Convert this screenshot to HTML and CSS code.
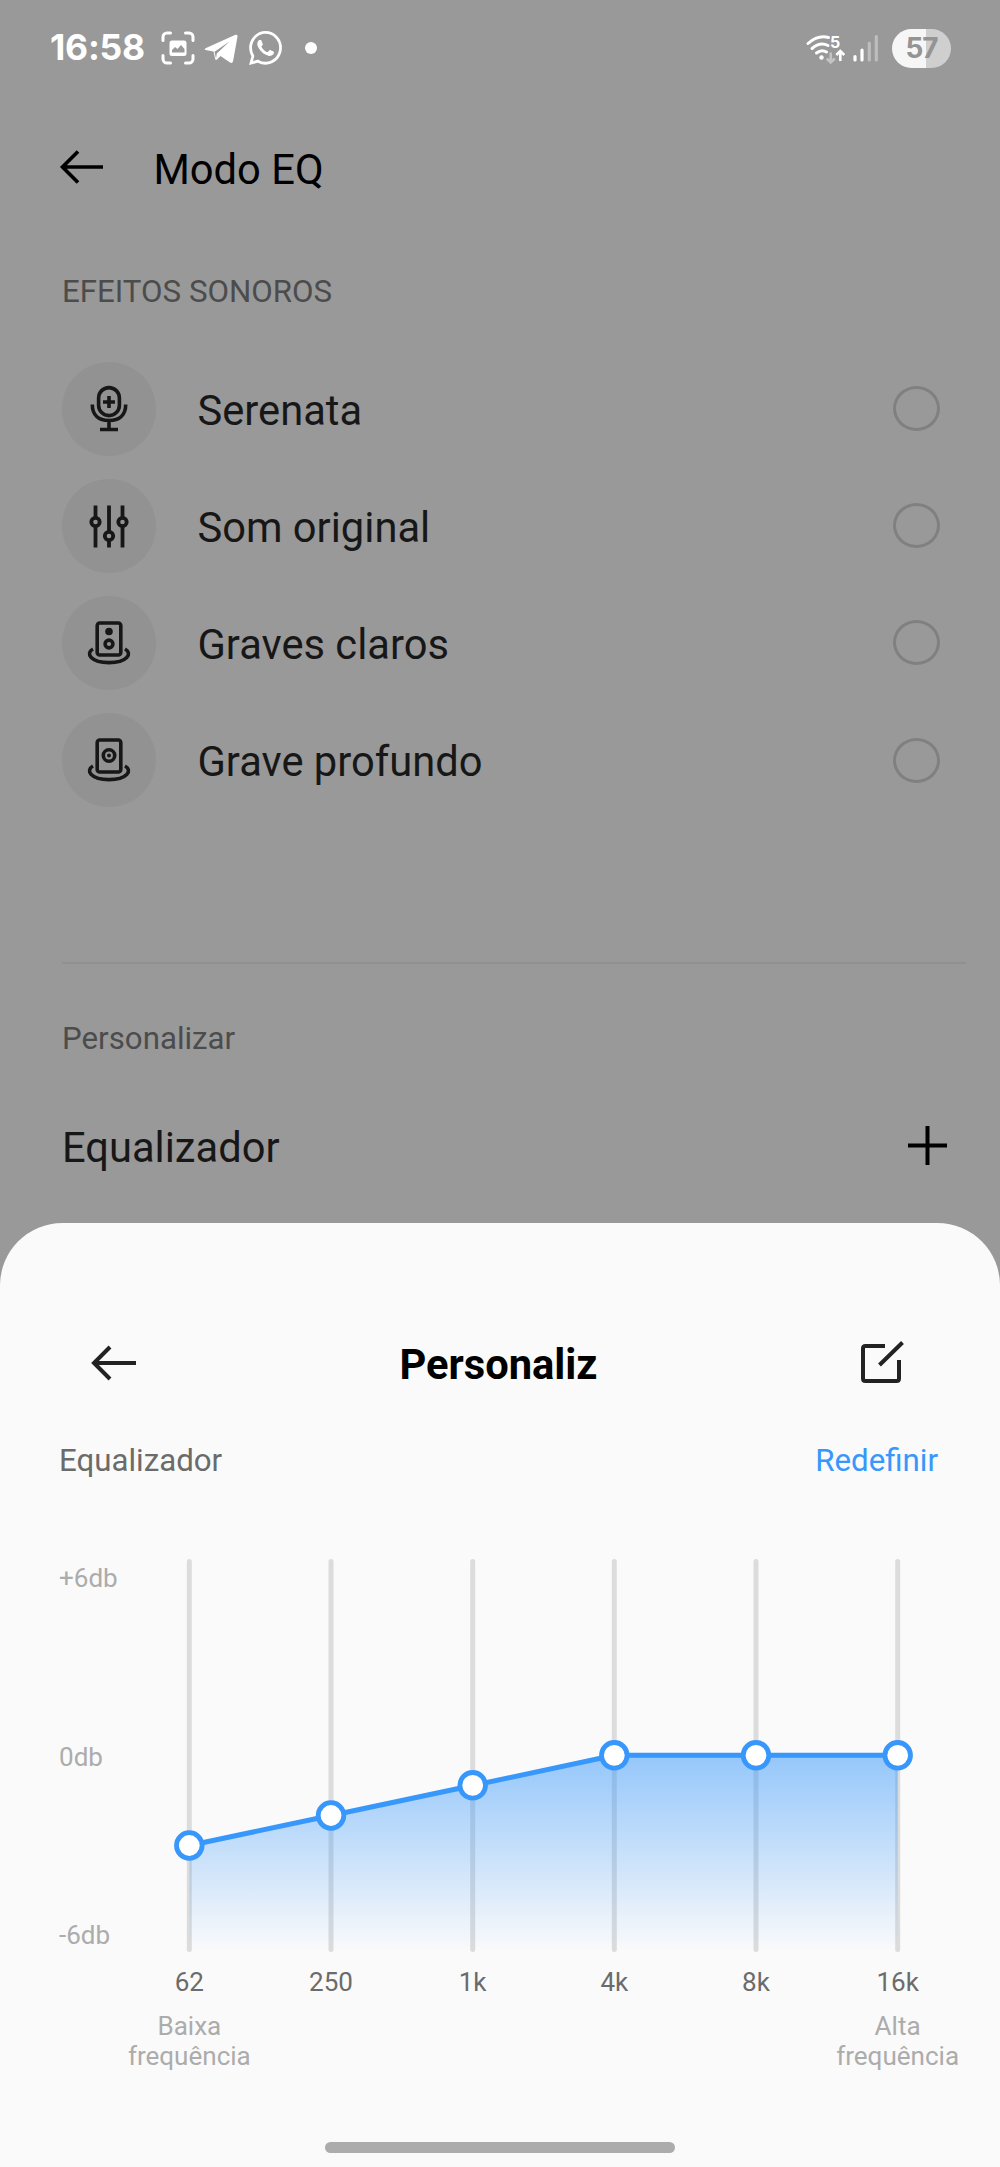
FILE: index.html
```html
<!DOCTYPE html>
<html lang="pt-BR">
<head>
<meta charset="utf-8">
<title>Modo EQ</title>
<link rel="stylesheet" href="styles.css">
</head>
<body>
<div class="screen">
  <div class="status">
    <span class="clock">16:58</span>
    <svg class="capture" width="34" height="34" viewBox="0 0 34 34">
      <path d="M2 9.500V6a4 4 0 0 1 4-4H9.500M24.500 2H28a4 4 0 0 1 4 4V9.500M32 24.500V28a4 4 0 0 1-4 4H24.500M9.500 32H6a4 4 0 0 1-4-4V24.500" fill="none" stroke="#fff" stroke-width="3" stroke-linecap="round"/>
      <rect x="8.500" y="9.500" width="17" height="15.500" rx="2.500" fill="#fff"/>
      <path d="M11 21.500v-2.500l3-3 2.500 2 3.500-4 3.500 4v3.500z" fill="#999"/>
    </svg>
    <svg class="telegram" width="34" height="30" viewBox="0 0 34 30">
      <path d="M1.500 14.300 31.500.8q2.500-.6 2 2L29 27.500q-.8 2.300-3 1L16.500 22 13 25.500q-1.600 1.200-2-1L9.500 17.500 1.500 16q-1.800-.8 0-1.700z" fill="#fff"/>
      <path d="M10.500 17.800 25.500 7.500 12.800 19.500 12 24.500z" fill="#999"/>
    </svg>
    <svg class="whatsapp" width="33" height="34" viewBox="0 0 24 24" preserveAspectRatio="none">
      <path fill="#fff" d="M17.472 14.382c-.297-.149-1.758-.867-2.030-.967-.273-.099-.471-.148-.67.15-.197.297-.767.966-.94 1.164-.173.199-.347.223-.644.075-.297-.15-1.255-.463-2.390-1.475-.883-.788-1.480-1.761-1.653-2.059-.173-.297-.018-.458.13-.606.134-.133.298-.347.446-.52.149-.174.198-.298.298-.497.099-.198.05-.371-.025-.52-.075-.149-.669-1.612-.916-2.207-.242-.579-.487-.5-.669-.51-.173-.008-.371-.01-.57-.01-.198 0-.52.074-.792.372-.272.297-1.040 1.016-1.040 2.479 0 1.462 1.065 2.875 1.213 3.074.149.198 2.096 3.200 5.077 4.487.709.306 1.262.489 1.694.625.712.227 1.360.195 1.871.118.571-.085 1.758-.719 2.006-1.413.248-.694.248-1.289.173-1.413-.074-.124-.272-.198-.57-.347m-5.421 7.403h-.004a9.870 9.870 0 0 1-5.031-1.378l-.361-.214-3.741.982.998-3.648-.235-.374a9.860 9.860 0 0 1-1.510-5.260c.001-5.450 4.436-9.884 9.888-9.884 2.640 0 5.122 1.030 6.988 2.898a9.825 9.825 0 0 1 2.893 6.994c-.003 5.450-4.437 9.884-9.885 9.884m8.413-18.297A11.815 11.815 0 0 0 12.050 0C5.495 0 .16 5.335.157 11.892c0 2.096.547 4.142 1.588 5.945L.057 24l6.305-1.654a11.882 11.882 0 0 0 5.683 1.448h.005c6.554 0 11.890-5.335 11.893-11.893a11.821 11.821 0 0 0-3.480-8.413z"/>
    </svg>
    <span class="more"></span>
    <svg class="wifi" width="40" height="32" viewBox="0 0 40 32">
      <g fill="none" stroke="#fff" stroke-width="3" stroke-linecap="round">
        <path d="M2 9.500Q12 .5 22.500 3.500"/>
        <path d="M6 14.500Q14 7.500 22 11.500"/>
        <path d="M10.500 19Q15.500 15 20.500 18"/>
      </g>
      <circle cx="15.500" cy="23.500" r="2.200" fill="#fff"/>
      <text x="24" y="14" class="wifi-gen">5</text>
      <path d="M24.700 18.500V28M20.700 24.500l4 4 4-4" fill="none" stroke="#c4c4c4" stroke-width="2.600"/>
      <path d="M34.300 27V17.500M30.300 21l4-4 4 4" fill="none" stroke="#fff" stroke-width="2.600"/>
    </svg>
    <svg class="signal" width="26" height="28" viewBox="0 0 26 28" stroke-width="3.200" stroke-linecap="round">
      <path d="M2 22.500v3.500M9 16v10" stroke="#fff"/>
      <path d="M16.300 9v17M23.300 2.500v23.500" stroke="#bdbdbd"/>
    </svg>
    <span class="battery">57</span>
  </div>

  <header class="appbar">
    <svg width="44" height="34" viewBox="0 0 44 34" fill="none" stroke="#000" stroke-width="3.600">
      <path d="M43 17H2M18 1.500 2.500 17 18 32.500"/>
    </svg>
    <h1>Modo EQ</h1>
  </header>

  <h2 class="section">EFEITOS SONOROS</h2>
  <ul class="effects">
    <li>
      <span class="disc"><svg width="46" height="50" viewBox="0 0 46 50" fill="none" stroke="#171717" stroke-width="3.600">
        <rect x="12.600" y="3.600" width="20.800" height="28" rx="10.400"/>
        <path d="M6.300 20.500C6.300 31.500 13 36.500 23 36.500S39.700 31.500 39.700 20.500M23 36.500V45M14 45.500H32M23 12V24M17 18H29"/>
      </svg></span>
      <span class="name">Serenata</span><span class="radio"></span>
    </li>
    <li>
      <span class="disc"><svg width="46" height="50" viewBox="0 0 46 50" fill="none" stroke="#171717" stroke-width="3.800">
        <path d="M9.500 4.500V16.500M9.500 25.500V46.500M23 4.500V30.500M23 39.500V46.500M36.500 4.500V16.500M36.500 25.500V46.500"/>
        <circle cx="9.500" cy="21" r="4.200"/><circle cx="23" cy="35" r="4.200"/><circle cx="36.500" cy="21" r="4.200"/>
      </svg></span>
      <span class="name">Som original</span><span class="radio"></span>
    </li>
    <li>
      <span class="disc"><svg width="46" height="50" viewBox="0 0 46 50" fill="none" stroke="#171717" stroke-width="3.600">
        <rect x="11.200" y="5" width="23.600" height="32" rx="2.500"/>
        <path d="M7 31C-1 35.500 5 44.600 23 44.600S47 35.500 39 31"/>
        <circle cx="23" cy="13.500" r="3.800" fill="#171717" stroke="none"/><circle cx="23" cy="26" r="3.900"/>
      </svg></span>
      <span class="name">Graves claros</span><span class="radio"></span>
    </li>
    <li>
      <span class="disc"><svg width="46" height="50" viewBox="0 0 46 50" fill="none" stroke="#171717" stroke-width="3.600">
        <rect x="11.200" y="5" width="23.600" height="32" rx="2.500"/>
        <path d="M7 31C-1 35.500 5 44.600 23 44.600S47 35.500 39 31"/>
        <circle cx="23" cy="20.500" r="5.700"/><circle cx="23" cy="20.500" r="2" fill="#171717" stroke="none"/>
      </svg></span>
      <span class="name">Grave profundo</span><span class="radio"></span>
    </li>
  </ul>

  <div class="custom">
    <h2 class="section">Personalizar</h2>
    <div class="add-row">
      <span class="name">Equalizador</span>
      <svg width="39" height="39" viewBox="0 0 39 39" stroke="#000" stroke-width="4"><path d="M0 19.500H39M19.500 0V39"/></svg>
    </div>
  </div>

  <section class="sheet">
    <div class="sheet-head">
      <svg width="46" height="36" viewBox="0 0 46 36" fill="none" stroke="#222" stroke-width="4">
        <path d="M45 18H3M19 2 3 18 19 34"/>
      </svg>
      <h2>Personaliz</h2>
      <svg width="46" height="44" viewBox="0 0 46 44" fill="none" stroke="#222" stroke-width="4">
        <path d="M25 5H5.500Q3 5 3 7.500V37.500Q3 40 5.500 40H36.500Q39 40 39 37.500V19M19.500 24 42.500 1.500"/>
      </svg>
    </div>
    <div class="sheet-sub"><span>Equalizador</span><a>Redefinir</a></div>
    <div class="chart">
      <div class="levels"><span>+6db</span><span>0db</span><span>-6db</span></div>
      <svg class="plot" width="752" height="393" viewBox="168 1559 752 393">
        <defs><linearGradient id="fade" gradientUnits="userSpaceOnUse" x1="0" y1="1755" x2="0" y2="1951">
          <stop offset="0" stop-color="#3797fb" stop-opacity=".52"/><stop offset="1" stop-color="#3797fb" stop-opacity="0"/>
        </linearGradient></defs>
        <path d="M189.300 1561.500V1949.500M331 1561.500V1949.500M472.700 1561.500V1949.500M614.300 1561.500V1949.500M756 1561.500V1949.500M897.700 1561.500V1949.500" stroke="#dcdcdc" stroke-width="5" stroke-linecap="round"/>
        <path d="M189.300 1845.500 331 1815.500 472.700 1785.500 614.300 1755.300H897.700V1951H189.300z" fill="url(#fade)"/>
        <path d="M189.300 1845.500 331 1815.500 472.700 1785.500 614.300 1755.300H897.700" fill="none" stroke="#3797fb" stroke-width="5"/>
        <g fill="#fff" stroke="#3797fb" stroke-width="4.800">
          <circle cx="189.300" cy="1845.500" r="12.800"/><circle cx="331" cy="1815.500" r="12.800"/><circle cx="472.700" cy="1785.300" r="12.800"/>
          <circle cx="614.300" cy="1755.300" r="12.800"/><circle cx="756" cy="1755.300" r="12.800"/><circle cx="897.700" cy="1755.300" r="12.800"/>
        </g>
      </svg>
    </div>
    <div class="bands">
      <div><b>62</b><span>Baixa<br>frequência</span></div>
      <div><b>250</b></div><div><b>1k</b></div><div><b>4k</b></div><div><b>8k</b></div>
      <div><b>16k</b><span>Alta<br>frequência</span></div>
    </div>
    <div class="homebar"></div>
  </section>
</div>
</body>
</html>
```

FILE: styles.css
```css
* { box-sizing: border-box; margin: 0; padding: 0; }
body { background: #999; font-family: Roboto, "Liberation Sans", sans-serif; }
svg { display: block; flex: none; overflow: visible; }
.screen { width: 1000px; height: 2167px; display: flex; flex-direction: column; overflow: hidden; background: #999; }

.status { height: 96px; padding-left: 50px; display: flex; align-items: center; flex: none; }
.clock { width: 111px; font: 700 35.500px/40px Inter, sans-serif; letter-spacing: -0.200px; color: #fff; }
.telegram { margin: 2px 0 0 9px; }
.whatsapp { margin-left: 11px; }
.more { width: 12px; height: 12px; border-radius: 50%; background: #fff; margin-left: 23px; }
.wifi { margin: 3px 0 0 489px; }
.wifi-gen { font: 700 16px Inter, sans-serif; fill: #fff; }
.signal { margin: 0 0 0 7px; }
.battery { width: 59px; height: 39px; margin-left: 13px; border-radius: 20px; background: linear-gradient(90deg, #f6f6f6 34px, #cfcfcf 34px); font: 700 28px/39px Inter, sans-serif; letter-spacing: -1px; text-align: center; color: #949494; }

.appbar { display: flex; align-items: center; height: 146px; padding-left: 60px; flex: none; padding-bottom: 3px; }
.appbar svg { margin-bottom: 2px; }
.appbar h1 { font-weight: 400; font-size: 41.670px; line-height: 50px; margin-left: 49.500px; padding-top: 4px; color: #000; }

.section { font-weight: 400; font-size: 31.250px; line-height: 38px; color: #4c4c4c; margin-left: 62px; }
.appbar + .section { margin-top: 31px; }
.effects { list-style: none; margin-top: 39px; padding: 0 60px 0 62px; }
.effects li { display: flex; align-items: center; height: 117.200px; }
.disc { width: 94px; height: 94px; border-radius: 50%; background: #929292; display: grid; place-items: center; }
.name { font-size: 41.670px; line-height: 50px; color: #171717; flex: 1; }
.effects .name { margin-left: 41.500px; padding-top: 4px; }
.radio { width: 47px; height: 45px; border: 3px solid #808080; border-radius: 50%; }

.custom { margin: 143px 34px 0 62px; border-top: 2px solid #909090; padding-top: 56px; }
.custom .section { margin-left: 0; }
.add-row { display: flex; align-items: center; padding-right: 19.500px; margin-top: 65px; }
.add-row svg { margin-bottom: 5px; }

.sheet { position: absolute; top: 1223px; left: 0; width: 1000px; height: 944px; background: #fafafa; border-radius: 62.500px 62.500px 0 0; display: flex; flex-direction: column; }
.sheet-head { margin-top: 115px; height: 50px; padding: 0 94px 0 91px; display: flex; align-items: center; justify-content: space-between; }
.sheet-head h2 { font-size: 41.670px; line-height: 50px; padding-top: 3px; font-weight: 700; color: #000; }
.sheet-sub { display: flex; justify-content: space-between; margin-top: 54px; padding: 0 62px 0 59px; font-size: 31.250px; line-height: 38px; color: #6b6b6b; }
.sheet-sub a { color: #3797fb; }
.chart { display: flex; margin-top: 79px; padding-left: 59px; }
.levels { width: 109px; height: 391px; display: flex; flex-direction: column; justify-content: space-between; padding-top: 4px; font-size: 26.040px; line-height: 30px; color: #acacac; }
.bands { display: grid; grid-template-columns: repeat(6, 141.670px); margin: 15px 0 0 118.500px; text-align: center; font-size: 26.040px; line-height: 30.700px; }
.bands b { display: block; font-weight: 400; color: #6b6b6b; }
.bands span { display: block; margin-top: 13px; color: #acacac; }
.homebar { width: 350px; height: 11px; border-radius: 6px; background: #acacac; margin: auto auto 14px; }
```
